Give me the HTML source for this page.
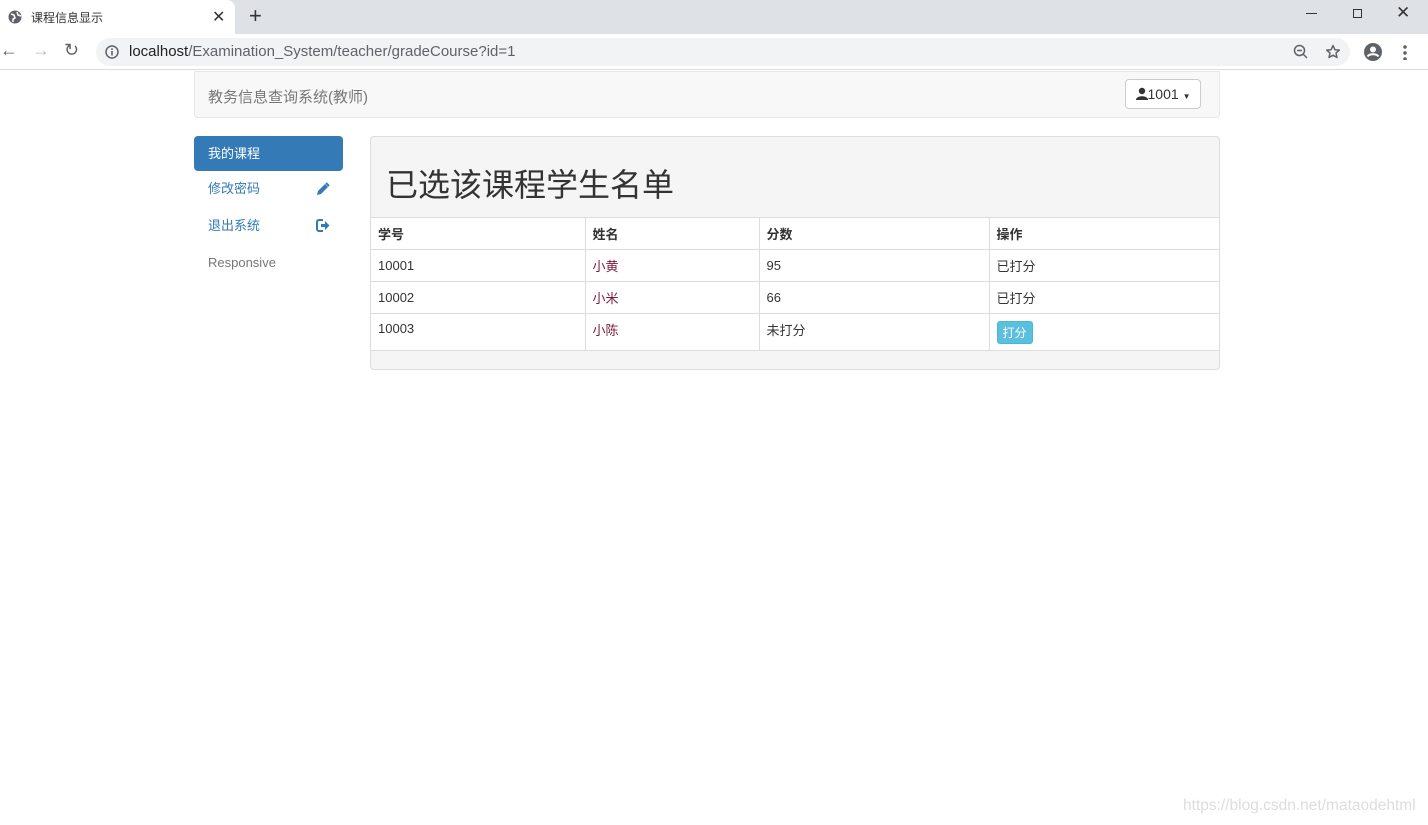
<!DOCTYPE html>
<html><head><meta charset="utf-8"><style>
*{box-sizing:border-box}
body{margin:0;width:1428px;height:825px;position:relative;background:#fff;font-family:"Liberation Sans","Noto Sans CJK SC",sans-serif;font-size:13px;color:#333;overflow:hidden}
.abs{position:absolute}
.tabbar{left:0;top:0;width:1428px;height:34px;background:#dee1e6}
.tab{left:0;top:0;width:235px;height:34px;background:#fff;border-radius:0 8px 0 0}
.toolbar{left:0;top:34px;width:1428px;height:36px;background:#fff;border-bottom:1px solid #dadce0}
.omni{left:96px;top:38px;width:1254px;height:28px;background:#f1f3f4;border-radius:14px}
.nav{left:194px;top:71px;width:1026px;height:47px;background:#f8f8f8;border:1px solid #e7e7e7;border-radius:0 0 4px 4px}
.btn{left:1125px;top:79px;width:76px;height:30px;border:1px solid #ccc;border-radius:4px;background:#fff;font-size:14px;line-height:28px;text-align:center;color:#333}
.side a{position:absolute;left:194px;width:149px;height:35px;line-height:35px;padding-left:14px;color:#337ab7;font-size:13px}
.panel{left:370px;top:136px;width:850px;height:234px;border:1px solid #ddd;border-radius:4px;background:#f5f5f5;overflow:hidden}
table{position:absolute;left:0;top:80px;width:848px;border-collapse:collapse;background:#fff}
td,th{border:1px solid #ddd;padding:0 7px;height:32px;text-align:left;font-size:13px;vertical-align:middle}
th{font-weight:bold}
tr td:first-child,tr th:first-child{border-left:none}
tr td:last-child,tr th:last-child{border-right:none}
</style></head><body>
<div class="abs tabbar"></div>
<div class="abs tab"></div>
<svg class="abs" style="left:8px;top:10px" width="14" height="14"><circle cx="7" cy="7" r="6.5" fill="#5f6368"/><path d="M3 4l3 1 1 3-2 1 0 3M9 2l1 3 3 1" stroke="#fff" stroke-width="1.5" fill="none"/></svg>
<div class="abs" style="left:31px;top:9px;font-size:12px;color:#333">课程信息显示</div>
<div class="abs" style="left:212px;top:7px;font-size:16px;color:#333">✕</div>
<div class="abs" style="left:249px;top:3px;font-size:22px;color:#333">+</div>
<div class="abs" style="left:1306px;top:13px;width:11px;height:1px;background:#333"></div>
<div class="abs" style="left:1353px;top:9px;width:9px;height:9px;border:1px solid #333"></div>
<div class="abs" style="left:1396px;top:3px;font-size:17px;color:#333">✕</div>
<div class="abs toolbar"></div>
<div class="abs" style="left:0;top:40px;font-size:18px;color:#5f6368">←</div>
<div class="abs" style="left:32px;top:40px;font-size:18px;color:#bbb">→</div>
<div class="abs" style="left:64px;top:40px;font-size:18px;color:#5f6368">↻</div>
<div class="abs omni"></div>
<svg class="abs" style="left:105px;top:45px" width="14" height="14"><circle cx="7" cy="7" r="6" fill="none" stroke="#5f6368" stroke-width="1.5"/><rect x="6.2" y="6" width="1.6" height="4.5" fill="#5f6368"/><rect x="6.2" y="3.3" width="1.6" height="1.6" fill="#5f6368"/></svg>
<div class="abs" style="left:129px;top:43px;font-size:15px;color:#202124">localhost<span style="color:#5f6368">/Examination_System/teacher/gradeCourse?id=1</span></div>
<svg class="abs" style="left:1293px;top:44px" width="16" height="16"><circle cx="6.5" cy="6.5" r="5" fill="none" stroke="#5f6368" stroke-width="1.5"/><path d="M4 6.5h5M10 10l4 4" stroke="#5f6368" stroke-width="1.5"/></svg>
<svg class="abs" style="left:1325px;top:44px" width="16" height="16"><path d="M8 1.5l1.9 4.2 4.5.4-3.4 3 1 4.4L8 11.2 4 13.5l1-4.4-3.4-3 4.5-.4z" fill="none" stroke="#5f6368" stroke-width="1.5" stroke-linejoin="round"/></svg>
<svg class="abs" style="left:1363px;top:42px" width="20" height="20"><circle cx="10" cy="10" r="9" fill="#5f6368"/><circle cx="10" cy="7.5" r="3" fill="#fff"/><path d="M4.5 14.5c2-3 9-3 11 0" stroke="#fff" stroke-width="2" fill="none"/></svg>
<div class="abs" style="left:1403px;top:44px;width:4px;height:16px;background:radial-gradient(circle,#5f6368 1.6px,transparent 2px) 0 0/4px 6px"></div>

<div class="abs nav"></div>
<div class="abs" style="left:208px;top:86px;font-size:15px;color:#777">教务信息查询系统(教师)</div>
<div class="abs btn"><svg width="12" height="13" style="vertical-align:-1px"><circle cx="6" cy="4" r="3.2" fill="#333"/><path d="M0 13c0-5 12-5 12 0z" fill="#333"/></svg>1001 <span style="font-size:8px">▼</span></div>

<div class="side">
<a style="top:136px;background:#337ab7;color:#fff;border-radius:4px">我的课程</a>
<a style="top:171px">修改密码<svg style="position:absolute;right:13px;top:11px" width="14" height="14"><path d="M1 13l1-4 7-7 3 3-7 7z" fill="#337ab7"/><path d="M10 1l3 3" stroke="#337ab7" stroke-width="2"/></svg></a>
<a style="top:208px">退出系统<svg style="position:absolute;right:13px;top:11px" width="14" height="13"><path d="M7 1H3a2 2 0 0 0-2 2v7a2 2 0 0 0 2 2h4" stroke="#337ab7" stroke-width="2" fill="none"/><path d="M5 5h4V2l4.5 4.5L9 11V8H5z" fill="#337ab7"/></svg></a>
<a style="top:245px;color:#777">Responsive</a>
</div>

<div class="abs panel">
<div class="abs" style="left:15px;top:23px;font-size:32px;color:#333;font-weight:normal">已选该课程学生名单</div>
<table>
<tr><th style="width:214px">学号</th><th style="width:174px">姓名</th><th style="width:230px">分数</th><th>操作</th></tr>
<tr><td>10001</td><td style="color:#7b1b3a">小黄</td><td>95</td><td>已打分</td></tr>
<tr><td>10002</td><td style="color:#7b1b3a">小米</td><td>66</td><td>已打分</td></tr>
<tr><td style="height:37px;vertical-align:top;padding-top:7px">10003</td><td style="vertical-align:top;padding-top:6px;color:#7b1b3a">小陈</td><td style="vertical-align:top;padding-top:6px">未打分</td><td><span style="display:inline-block;background:#5bc0de;color:#fff;border:1px solid #46b8da;border-radius:3px;font-size:12px;padding:2px 5px;margin-top:1px">打分</span></td></tr>
</table>
</div>
<div class="abs" style="left:1183px;top:797px;font-size:15.5px;color:#ddd">https://blog.csdn.net/mataodehtml</div>
</body></html>
